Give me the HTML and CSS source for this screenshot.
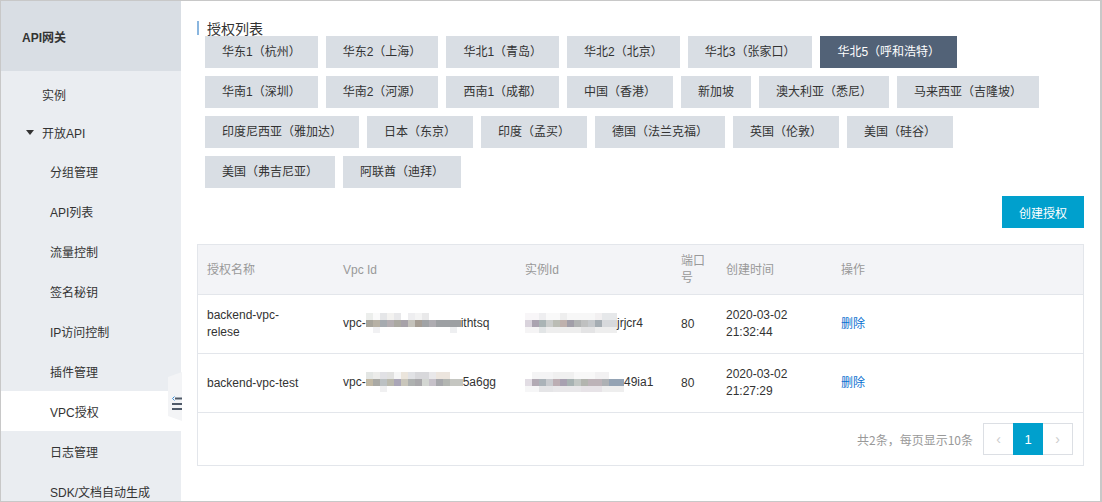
FILE: index.html
```html
<!DOCTYPE html>
<html lang="zh">
<head>
<meta charset="utf-8">
<title>VPC授权</title>
<link rel="stylesheet" href="styles.css">
</head>
<body>
<div class="frame">
  <aside class="sidebar">
    <div class="brand">API网关</div>
    <ul class="menu">
      <li class="item top">实例</li>
      <li class="item top group"><span class="caret"></span>开放API</li>
      <li class="item sub">分组管理</li>
      <li class="item sub">API列表</li>
      <li class="item sub">流量控制</li>
      <li class="item sub">签名秘钥</li>
      <li class="item sub">IP访问控制</li>
      <li class="item sub">插件管理</li>
      <li class="item sub active">VPC授权</li>
      <li class="item sub">日志管理</li>
      <li class="item sub">SDK/文档自动生成</li>
    </ul>
    <div class="collapse">
      <svg width="10" height="14" viewBox="0 0 10 14">
        <path d="M3 2.5h7M0 8h10M0 13h10" stroke="#4f5a69" stroke-width="2"/>
        <path d="M2.5 0.5L0.5 2.5L2.5 4.5" stroke="#3d8fd6" stroke-width="1" fill="none"/>
      </svg>
    </div>
  </aside>
  <main class="main">
    <h2 class="title">授权列表</h2>
    <div class="regions">
      <span class="region">华东1（杭州）</span>
      <span class="region">华东2（上海）</span>
      <span class="region">华北1（青岛）</span>
      <span class="region">华北2（北京）</span>
      <span class="region">华北3（张家口）</span>
      <span class="region selected">华北5（呼和浩特）</span>
      <span class="region">华南1（深圳）</span>
      <span class="region">华南2（河源）</span>
      <span class="region">西南1（成都）</span>
      <span class="region">中国（香港）</span>
      <span class="region">新加坡</span>
      <span class="region">澳大利亚（悉尼）</span>
      <span class="region">马来西亚（吉隆坡）</span>
      <span class="region">印度尼西亚（雅加达）</span>
      <span class="region">日本（东京）</span>
      <span class="region">印度（孟买）</span>
      <span class="region">德国（法兰克福）</span>
      <span class="region">英国（伦敦）</span>
      <span class="region">美国（硅谷）</span>
      <span class="region">美国（弗吉尼亚）</span>
      <span class="region">阿联酋（迪拜）</span>
    </div>
    <div class="toolbar">
      <button class="btn-primary">创建授权</button>
    </div>
    <div class="table-box">
      <table class="grid">
        <colgroup>
          <col class="c1"><col class="c2"><col class="c3"><col class="c4"><col class="c5"><col>
        </colgroup>
        <thead>
          <tr>
            <th>授权名称</th>
            <th>Vpc Id</th>
            <th>实例Id</th>
            <th>端口号</th>
            <th>创建时间</th>
            <th>操作</th>
          </tr>
        </thead>
        <tbody>
          <tr>
            <td>backend-vpc-<br>relese</td>
            <td>vpc-<span class="mask m1"></span>ithtsq</td>
            <td><span class="mask m2"></span>jrjcr4</td>
            <td>80</td>
            <td>2020-03-02<br>21:32:44</td>
            <td><a class="link">删除</a></td>
          </tr>
          <tr>
            <td>backend-vpc-test</td>
            <td>vpc-<span class="mask m3"></span>5a6gg</td>
            <td><span class="mask m4"></span>49ia1</td>
            <td>80</td>
            <td>2020-03-02<br>21:27:29</td>
            <td><a class="link">删除</a></td>
          </tr>
        </tbody>
      </table>
      <div class="footer">
        <span class="total">共2条，每页显示10条</span>
        <div class="pager">
          <span class="page arrow">‹</span>
          <span class="page current">1</span>
          <span class="page arrow">›</span>
        </div>
      </div>
    </div>
  </main>
</div>
</body>
</html>
```

FILE: styles.css
```css
* { box-sizing: border-box; }
html, body { margin: 0; padding: 0; background: #fff; }
body {
  font-family: "Liberation Sans", "Noto Sans CJK SC", sans-serif;
  font-size: 12px;
  color: #333;
}
.frame {
  width: 1102px;
  height: 502px;
  border: 1px solid #c8c8c8;
  border-right-width: 2px;
  display: flex;
  overflow: hidden;
}
.sidebar {
  position: relative;
  width: 180px;
  flex: none;
  background: #eaedf1;
}
.brand {
  height: 70px;
  background: #d9dee4;
  padding-left: 21px;
  display: flex;
  align-items: center;
  font-weight: bold;
  font-size: 12px;
  color: #333;
}
.menu {
  list-style: none;
  margin: 0;
  padding: 4px 0 0;
}
.item {
  display: flex;
  align-items: center;
  height: 40px;
  color: #333;
}
.item.top { height: 38px; padding-left: 41px; }
.item.sub { padding-left: 49px; }
.item.active { background: #fff; }
.group { position: relative; }
.caret {
  position: absolute;
  left: 25px;
  top: 17px;
  width: 0; height: 0;
  border-left: 4px solid transparent;
  border-right: 4px solid transparent;
  border-top: 5px solid #333;
}
.collapse {
  position: absolute;
  left: 167px;
  top: 371px;
  width: 14px;
  height: 49px;
  background: #f3f4f6;
  clip-path: polygon(100% 0, 0 10%, 0 90%, 100% 100%);
  display: flex;
  align-items: center;
  justify-content: flex-end;
  padding-top: 12px;
}
.collapse svg { display: block; }

.main {
  flex: 1;
  padding: 20px 16px 0 16px;
  min-width: 0;
}
.title {
  margin: 0;
  font-size: 14px;
  font-weight: normal;
  line-height: 14px;
  height: 14px;
  border-left: 2px solid #8ab6df;
  padding-left: 8px;
  color: #333;
  font-family: "Noto Sans CJK SC", sans-serif;
}
.regions {
  display: flex;
  flex-wrap: wrap;
  margin: 1px 0 0 8px;
}
.region {
  height: 32px;
  line-height: 32px;
  padding: 0 17px;
  margin: 0 8px 8px 0;
  background: #d9dee4;
  color: #333;
  white-space: nowrap;
}
.region.selected {
  background: #526277;
  color: #fff;
}
.toolbar {
  display: flex;
  justify-content: flex-end;
}
.btn-primary {
  width: 82px;
  height: 32px;
  border: none;
  background: #00a0cd;
  color: #fff;
  font: inherit;
  font-size: 12px;
  padding: 0;
}
.table-box {
  margin-top: 16px;
  border: 1px solid #e3e6eb;
}
.grid {
  width: 100%;
  border-collapse: collapse;
  table-layout: fixed;
}
.c1 { width: 136px; }
.c2 { width: 182px; }
.c3 { width: 156px; }
.c4 { width: 45px; }
.c5 { width: 115px; }
.grid th {
  background: #f3f4f7;
  color: #999;
  font-weight: normal;
  text-align: left;
  padding: 8px 9px 7px;
  line-height: 17px;
  border-bottom: 1px solid #e3e6eb;
  vertical-align: middle;
}
.grid td {
  padding: 12px 9px;
  line-height: 17px;
  border-bottom: 1px solid #e3e6eb;
  vertical-align: middle;
  color: #333;
  white-space: nowrap;
}
.grid td:first-child { white-space: normal; }
.link { color: #0a6fd0; cursor: pointer; }
.mask {
  display: inline-block;
  vertical-align: middle;
  height: 20px;
  margin-top: -3px;
}
.m1 {
  width: 95px;
  background:
    linear-gradient(90deg, #a8a59c 0 7px, #b7b1a5 7px 14px, #a6abb0 14px 21px, #b4aeb2 21px 28px, #aba9a2 28px 35px, #a7a2a9 35px 42px, #c4c2bb 42px 49px, #a59d94 49px 56px, #a0a3a6 56px 63px, #aeacb1 63px 70px, #9da0a3 70px 95px) 0 7px / 100% 7px no-repeat,
    linear-gradient(90deg, #eceeec 0 7px, #fafafa 7px 14px, #e5e6e8 14px 21px, #f3f2f0 21px 28px, #e8e8ea 28px 35px, #fff 35px 42px, #eeeef0 42px 49px, #f4f4f4 49px 56px, #e9e9ea 56px 63px, #fff 63px 95px) 0 0 / 100% 7px no-repeat,
    linear-gradient(90deg, #fff 0 7px, #f1f1f3 7px 14px, #fff 14px 84px, #eeeff1 84px 91px, #fff 91px 95px) 0 14px / 100% 6px no-repeat;
}
.m2 {
  width: 92px;
  background:
    linear-gradient(90deg, #d9d3dc 0 7px, #aaa3b0 7px 14px, #aab4b5 14px 21px, #cbcdcc 21px 28px, #bbbdb5 28px 35px, #bfb1ad 35px 42px, #a19ea8 42px 49px, #b1b3b3 49px 56px, #bfc0c0 56px 63px, #c5c8cb 63px 70px, #a5adb3 70px 77px, #d7d9dc 77px 92px) 0 7px / 100% 7px no-repeat,
    linear-gradient(90deg, #f8f6f8 0 14px, #eeeef0 14px 21px, #f9f9f9 21px 35px, #eeeeee 35px 42px, #f7f7f7 42px 70px, #f2f0f1 70px 77px, #e6e8ea 77px 92px) 0 0 / 100% 7px no-repeat,
    linear-gradient(90deg, #f5f4f5 0 14px, #e2e5e6 14px 21px, #eeeeee 21px 56px, #e4e4e5 56px 70px, #eeeeee 70px 92px) 0 14px / 100% 6px no-repeat;
}
.m3 {
  width: 97px;
  background:
    linear-gradient(90deg, #c1b8a4 0 7px, #a9a9a5 7px 14px, #bcc1c3 14px 21px, #bab9ad 21px 28px, #aaa6b7 28px 35px, #c9c6bb 35px 42px, #aeb1b0 42px 49px, #a9a8ab 49px 56px, #d3d6d2 56px 63px, #c6c1c9 63px 70px, #a7a8ac 70px 77px, #b3b6b2 77px 84px, #c5c6c1 84px 97px) 0 7px / 100% 7px no-repeat,
    linear-gradient(90deg, #e3e6e4 0 7px, #ececea 7px 14px, #e1e1e5 14px 21px, #e1e1e0 21px 28px, #f5f5f5 28px 35px, #ebe5dc 35px 42px, #e1e2e5 42px 49px, #d8d8db 49px 63px, #e9e8ea 63px 70px, #ece5de 70px 84px, #ffffff 84px 97px) 0 0 / 100% 7px no-repeat,
    linear-gradient(90deg, #fff 0 14px, #f0f0f1 14px 21px, #fff 21px 97px) 0 14px / 100% 6px no-repeat;
}
.m4 {
  width: 99px;
  background:
    linear-gradient(90deg, #e2dde4 0 7px, #b2aab4 7px 14px, #abb3b9 14px 21px, #c9cbcf 21px 28px, #bcaeb3 28px 35px, #a8a1b1 35px 42px, #a7b2b2 42px 49px, #c2c7c4 49px 56px, #b3b5af 56px 63px, #bdb3b8 63px 77px, #aeb1b4 77px 84px, #94a3b4 84px 99px) 0 7px / 100% 7px no-repeat,
    linear-gradient(90deg, #fff 0 7px, #f4f4f5 7px 28px, #f0f0f0 28px 49px, #f8f8f8 49px 70px, #f2f1f2 70px 84px, #fff 84px 99px) 0 0 / 100% 7px no-repeat,
    linear-gradient(90deg, #f6f6f7 0 14px, #e5e5e7 14px 28px, #e9e8ea 28px 56px, #e7e3e7 56px 77px, #eeeeee 77px 99px) 0 14px / 100% 6px no-repeat;
}
.footer {
  display: flex;
  justify-content: flex-end;
  align-items: center;
  padding: 10px 10px 10px 0;
}
.total {
  color: #999;
  margin-right: 11px;
  font-family: "Noto Sans CJK SC", sans-serif;
}
.pager { display: flex; }
.page {
  width: 31px;
  height: 32px;
  border: 1px solid #dcdfe4;
  display: flex;
  align-items: center;
  justify-content: center;
  margin-left: -1px;
  color: #333;
  font-size: 13px;
}
.page.arrow { color: #ccc; font-size: 14px; }
.page.current {
  width: 30px;
  background: #00a0cd;
  border-color: #00a0cd;
  color: #fff;
  position: relative;
}
```
